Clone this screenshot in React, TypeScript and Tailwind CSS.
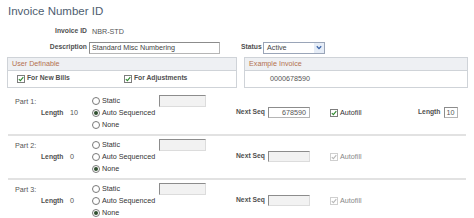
import React from "react";

const L = "font-bold text-[6.75px] text-[#505050] whitespace-nowrap";

const Radio = ({ on, label }: { on?: boolean; label: string }) => (
  <div className="flex items-center gap-[2px] h-[12px]">
    <span className="w-[8px] h-[8px] rounded-full border border-[#7a7a7a] bg-white flex items-center justify-center">
      {on && <span className="w-[4px] h-[4px] rounded-full bg-[#2f4f2f]" />}
    </span>
    <span className="text-[#333] whitespace-nowrap">{label}</span>
  </div>
);

const Check = ({ disabled }: { disabled?: boolean }) => (
  <span
    className={
      "w-[8px] h-[8px] border flex items-center justify-center shrink-0 " +
      (disabled ? "border-[#cfcfcf] bg-white" : "border-[#7d7d7d] bg-white")
    }
  >
    <svg width="6" height="6" viewBox="0 0 6 6">
      <path
        d="M0.8 3.1 L2.4 4.7 L5.3 1.1"
        fill="none"
        stroke={disabled ? "#b9b9b9" : "#2f8a2f"}
        strokeWidth="1.1"
      />
    </svg>
  </span>
);

const Part = ({ n, mode, len, seq, last }: { n: number; mode: string; len: string; seq?: string; last?: boolean }) => (
  <div>
    <div className="flex h-[12px] items-center">
      <div className="w-[92px] pl-[15px] pt-[3px] text-[#555] whitespace-nowrap">Part {n}:</div>
      <div className="w-[67px]">
        <Radio on={mode === "static"} label="Static" />
      </div>
      <div className="w-[47px] h-[12px] border border-[#8c8c8c] border-r-[#dcdcdc] border-b-[#dcdcdc] bg-[#f2f2f2]" />
    </div>
    <div className="flex h-[12px] items-center">
      <div className="w-[92px] flex items-center pl-[41px]">
        <span className={L + " w-[29px] pt-[1px]"}>Length</span>
        <span className="text-[#555] pt-[1px]">{len}</span>
      </div>
      <div className="w-[144px]">
        <Radio on={mode === "auto"} label="Auto Sequenced" />
      </div>
      <span className={L + " w-[32px]"}>Next Seq</span>
      <div
        className={
          "w-[42px] h-[11px] border flex items-center justify-end pr-[3px] text-[#555] " +
          (seq
            ? "bg-white border-[#b5b5b5] border-t-[#8c8c8c] border-l-[#8c8c8c]"
            : "bg-[#f2f2f2] border-[#dcdcdc] border-t-[#8c8c8c] border-l-[#8c8c8c]")
        }
      >
        {seq}
      </div>
      <div className="ml-[20px] w-[88px] flex items-center gap-[2px]">
        <Check disabled={!seq} />
        <span className={seq ? "text-[#333]" : "text-[#888]"}>Autofill</span>
      </div>
      {seq && (
        <div className="flex items-center gap-[3px]">
          <span className={L}>Length</span>
          <div className="w-[14px] h-[11px] border border-[#b5b5b5] border-t-[#8c8c8c] border-l-[#8c8c8c] bg-white flex items-center justify-end pr-[2px] text-[#555]">
            {len}
          </div>
        </div>
      )}
    </div>
    <div className="flex h-[12px] items-center">
      <div className="w-[92px]" />
      <Radio on={mode === "none"} label="None" />
    </div>
    {!last && <div className="mt-[3px] mb-[3px] h-[2px] ml-[8px] w-[458px] bg-[#e2e2e2]" />}
  </div>
);

export default function App() {
  return (
    <div
      className="w-[474px] h-[218px] bg-white overflow-hidden text-[7.2px] leading-none text-[#333]"
      style={{ fontFamily: '"Liberation Sans", Arial, sans-serif' }}
    >
      <div className="pl-[8px] pt-[6px] text-[11.5px] leading-none text-[#4e5d70]">Invoice Number ID</div>
      <div className="flex items-center h-[10px] mt-[9px]">
        <div className={L + " w-[88px] text-right pr-[1px]"}>Invoice ID</div>
        <div className="pl-[4px] text-[#555]">NBR-STD</div>
      </div>
      <div className="flex items-center h-[12px] mt-[5px]">
        <div className={L + " w-[89px] text-right pr-[2px]"}>Description</div>
        <div className="w-[131px] h-[12px] border border-[#b5b5b5] border-t-[#8c8c8c] border-l-[#8c8c8c] bg-white flex items-center pl-[2px] text-[#444] whitespace-nowrap">
          Standard Misc Numbering
        </div>
        <div className={L + " ml-[21px] w-[22px]"}>Status</div>
        <div className="w-[62px] h-[12px] border border-[#9aa5b8] bg-white flex items-center justify-between text-[#444]">
          <span className="pl-[3px]">Active</span>
          <span className="w-[10px] h-[10px] bg-[#e6edf7] flex items-center justify-center">
            <svg width="6" height="5" viewBox="0 0 6 5">
              <path d="M0.8 1.2 L3 3.6 L5.2 1.2" fill="none" stroke="#3a63a8" strokeWidth="1.3" />
            </svg>
          </span>
        </div>
      </div>
      <div className="flex mt-[3px] pl-[7px] gap-[7px]">
        <div className="w-[230px] h-[31px] border border-[#cfd3d8] flex flex-col">
          <div className="h-[13px] bg-[#eef0f3] border-b border-[#cfd3d8] flex items-center pl-[4px] text-[#b4714f]">
            User Definable
          </div>
          <div className="flex-1 flex items-center">
            <div className="pl-[9px] w-[116px] flex items-center gap-[2px]">
              <Check />
              <span className={L}>For New Bills</span>
            </div>
            <div className="flex items-center gap-[2px]">
              <Check />
              <span className={L}>For Adjustments</span>
            </div>
          </div>
        </div>
        <div className="w-[224px] h-[31px] border border-[#cfd3d8] flex flex-col">
          <div className="h-[13px] bg-[#eef0f3] border-b border-[#cfd3d8] flex items-center pl-[4px] text-[#b4714f]">
            Example Invoice
          </div>
          <div className="flex-1 flex items-center pl-[25px] text-[#555]">0000678590</div>
        </div>
      </div>
      <div className="mt-[7px]">
        <Part n={1} mode="auto" len="10" seq="678590" />
        <Part n={2} mode="none" len="0" />
        <Part n={3} mode="none" len="0" last />
      </div>
    </div>
  );
}
